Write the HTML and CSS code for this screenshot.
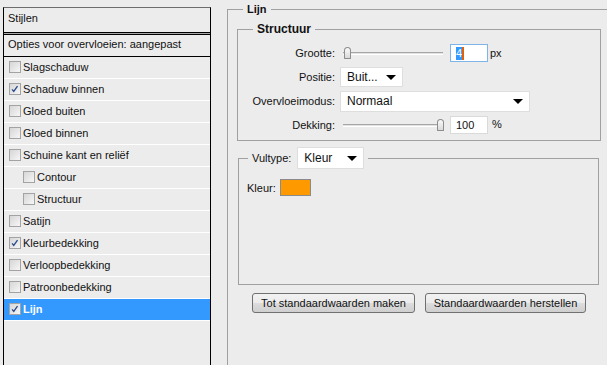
FILE: index.html
```html
<!DOCTYPE html>
<html lang="nl">
<head>
    <meta charset="UTF-8">
    <link rel="stylesheet" href="styles.css">
</head>
<body>
    <div class="dialog">
        <!-- stijlenlijst -->
        <div class="styles-panel">
            <div class="panel-head">Stijlen</div>
            <div class="panel-blend">Opties voor overvloeien: aangepast</div>
            <ul class="style-list">
                <li><span class="cb"></span>Slagschaduw</li>
                <li><span class="cb checked"><svg viewBox="0 0 12 12"><path d="M2.5 6.5 L4.5 9 L9 2.5"/></svg></span>Schaduw binnen</li>
                <li><span class="cb"></span>Gloed buiten</li>
                <li><span class="cb"></span>Gloed binnen</li>
                <li><span class="cb"></span>Schuine kant en reliëf</li>
                <li class="sub"><span class="cb"></span>Contour</li>
                <li class="sub"><span class="cb"></span>Structuur</li>
                <li><span class="cb"></span>Satijn</li>
                <li><span class="cb checked"><svg viewBox="0 0 12 12"><path d="M2.5 6.5 L4.5 9 L9 2.5"/></svg></span>Kleurbedekking</li>
                <li><span class="cb"></span>Verloopbedekking</li>
                <li><span class="cb"></span>Patroonbedekking</li>
                <li class="selected"><span class="cb checked"><svg viewBox="0 0 12 12"><path d="M2.5 6.5 L4.5 9 L9 2.5"/></svg></span>Lijn</li>
            </ul>
        </div>

        <!-- lijn instellingen -->
        <fieldset class="group outer">
            <legend>Lijn</legend>

            <fieldset class="group structure">
                <legend>Structuur</legend>
                <div class="form-grid">
                    <div class="label">Grootte:</div>
                    <div class="control">
                        <div class="slider"><span class="thumb start"></span></div>
                        <div class="num focused"><span class="sel">4</span><span class="caret"></span></div>
                        <span class="unit">px</span>
                    </div>

                    <div class="label">Positie:</div>
                    <div class="control">
                        <div class="select small">Buit...<span class="arrow"></span></div>
                    </div>

                    <div class="label">Overvloeimodus:</div>
                    <div class="control">
                        <div class="select wide">Normaal<span class="arrow"></span></div>
                    </div>

                    <div class="label">Dekking:</div>
                    <div class="control">
                        <div class="slider"><span class="thumb end"></span></div>
                        <div class="num">100</div>
                        <span class="unit pct">%</span>
                    </div>
                </div>
            </fieldset>

            <fieldset class="group fill">
                <legend>
                    <span class="legend-label">Vultype:</span>
                    <div class="select fill-select">Kleur<span class="arrow"></span></div>
                </legend>
                <div class="color-row">
                    <span>Kleur:</span>
                    <span class="swatch"></span>
                </div>
            </fieldset>

            <div class="buttons">
                <button class="btn first">Tot standaardwaarden maken</button>
                <button class="btn second">Standaardwaarden herstellen</button>
            </div>
        </fieldset>
    </div>
</body>
</html>
```

FILE: styles.css
```css
* {
    box-sizing: border-box;
    margin: 0;
    padding: 0;
}

html, body {
    height: 100%;
    overflow: hidden;
}

body {
    background: #ececec;
    color: #111;
    font-family: "Liberation Sans", Arial, sans-serif;
    font-size: 11px;
}

.dialog {
    display: flex;
    align-items: flex-start;
    padding-left: 3px;
}

/* stijlenlijst links */
.styles-panel {
    flex: none;
    width: 208px;
    height: 400px;
    margin-top: 7px;
    border: 1px solid #000;
    border-top-color: #6d6d6d;
}

.panel-head {
    height: 25px;
    line-height: 21px;
    padding-left: 4px;
    border-bottom: 1px solid #000;
    box-shadow: 0 1px 0 #a8a8a8;
    margin-bottom: 1px;
}

.panel-blend {
    height: 23px;
    line-height: 19px;
    padding-left: 4px;
    border-top: 1px solid #000;
    border-bottom: 1px solid #000;
}

.style-list {
    list-style: none;
}

.style-list li {
    display: flex;
    align-items: center;
    height: 22px;
    padding-left: 5px;
    padding-bottom: 2px;
    border-bottom: 1px solid #fff;
}

.style-list li.sub {
    padding-left: 19px;
}

.style-list li.selected {
    background: #3399ff;
    color: #fff;
    font-weight: bold;
}

.cb {
    width: 12px;
    height: 12px;
    margin-right: 2px;
    border: 1px solid #a3a3a3;
    background: linear-gradient(135deg, #d6d6d6, #f6f6f6);
    flex: none;
}

.cb svg {
    display: block;
    width: 10px;
    height: 10px;
}

.cb svg path {
    fill: none;
    stroke: #2b4a8c;
    stroke-width: 1.6;
}

/* groepen */
.group {
    border: 1px solid #a0a0a0;
}

.group legend {
    line-height: 14px;
    font-weight: bold;
    padding: 0 4px;
}

.outer {
    flex: none;
    width: 420px;
    height: 420px;
    margin-left: 16px;
    margin-top: 2px;
    padding: 6px 0 0 9px;
}

.outer > legend {
    margin-left: 6px;
}

.structure {
    width: 364px;
    padding: 5px 0 3px 0;
}

.structure > legend {
    margin-left: 15px;
    font-size: 12px;
}

.form-grid {
    display: grid;
    grid-template-columns: 97px 1fr;
    grid-auto-rows: 24px;
    column-gap: 5px;
    align-items: center;
}

.label {
    text-align: right;
}

.control {
    display: flex;
    align-items: center;
}

/* schuifregelaar */
.slider {
    position: relative;
    width: 100px;
    height: 3px;
    margin-left: 3px;
    margin-right: 7px;
    border-top: 1px solid #a6a6a6;
    border-bottom: 1px solid #fff;
    background: #e2e2e2;
}

.thumb {
    position: absolute;
    top: -6px;
    width: 7px;
    height: 12px;
    border: 1px solid #8d8d8d;
    border-radius: 4px 4px 1px 1px;
    background: linear-gradient(#fafafa, #d9d9d9);
}

.thumb.start {
    left: 1px;
}

.thumb.end {
    left: 94px;
}

.num {
    width: 38px;
    height: 18px;
    line-height: 16px;
    padding-left: 5px;
    background: #fff;
    border: 1px solid #dadada;
}

.num.focused {
    border-color: #7eb4ea;
    display: flex;
    align-items: center;
}

.sel {
    background: #3399ff;
    color: #fff;
    line-height: 13px;
}

.caret {
    width: 2px;
    height: 13px;
    background: #e06010;
}

.unit {
    margin-left: 2px;
}

.unit.pct {
    margin-left: 4px;
    margin-top: -3px;
}

/* keuzelijsten */
.select {
    display: flex;
    align-items: center;
    justify-content: space-between;
    height: 20px;
    padding: 0 6px 0 6px;
    background: #fff;
    border: 1px solid #dedede;
    font-size: 12px;
}

.select.small {
    width: 63px;
}

.select.wide {
    width: 190px;
    height: 21px;
}

.arrow {
    width: 0;
    height: 0;
    border-left: 5px solid transparent;
    border-right: 5px solid transparent;
    border-top: 5px solid #000;
}

/* vultype */
.fill {
    width: 361px;
    height: 138px;
    margin-top: 6px;
    margin-left: 1px;
    padding: 10px 0 0 8px;
}

.fill > legend {
    display: flex;
    align-items: center;
    font-weight: normal;
    line-height: normal;
    margin-left: 1px;
}

.legend-label {
    margin-right: 6px;
}

.fill-select {
    width: 67px;
    height: 22px;
}

.color-row {
    display: flex;
    align-items: center;
    gap: 4px;
}

.swatch {
    width: 31px;
    height: 17px;
    background: #ff9900;
    border: 1px solid #8a8a8a;
}

/* knoppen */
.buttons {
    display: flex;
    gap: 10px;
    margin-top: 8px;
    margin-left: 15px;
}

.btn {
    height: 20px;
    font-family: inherit;
    font-size: 11px;
    color: #111;
    border: 1px solid #707070;
    border-radius: 3px;
    background: linear-gradient(#f2f2f2 0%, #ebebeb 50%, #dddddd 51%, #cfcfcf 100%);
}

.btn.first {
    width: 163px;
}

.btn.second {
    width: 161px;
}
```
